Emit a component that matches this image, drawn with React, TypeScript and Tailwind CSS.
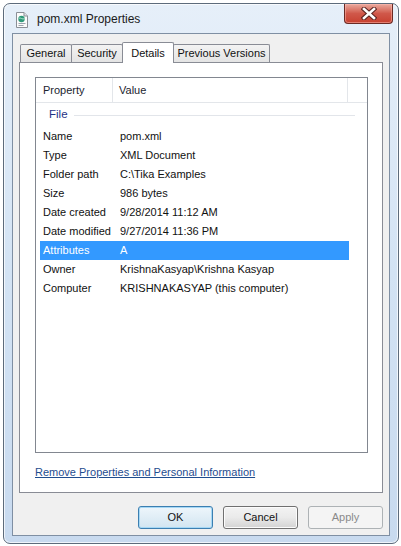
const rows: [string, string][] = [
  ['Name', 'pom.xml'],
  ['Type', 'XML Document'],
  ['Folder path', 'C:\\Tika Examples'],
  ['Size', '986 bytes'],
  ['Date created', '9/28/2014 11:12 AM'],
  ['Date modified', '9/27/2014 11:36 PM'],
  ['Attributes', 'A'],
  ['Owner', 'KrishnaKasyap\\Krishna Kasyap'],
  ['Computer', 'KRISHNAKASYAP (this computer)'],
];

const SELECTED = 'Attributes';

function XmlIcon() {
  return (
    <svg width="14" height="16" viewBox="0 0 14 16">
      <path d="M1.5 0.5 H9 L12.5 4 V15.5 H1.5 Z" fill="#fbfbfb" stroke="#8a8f96" />
      <path d="M9 0.5 V4 H12.5" fill="#e2e4e8" stroke="#8a8f96" />
      <circle cx="6.5" cy="7" r="3.2" fill="#2f9a7a" />
      <path d="M4 6.2 C5.5 5.2 7.5 8 9.5 6.6" stroke="#b7e6d3" strokeWidth="0.9" fill="none" />
      <rect x="3.5" y="11" width="7" height="1" fill="#9aa3ad" />
      <rect x="3.5" y="13" width="5" height="1" fill="#9aa3ad" />
    </svg>
  );
}

function CloseGlyph() {
  return (
    <svg width="16" height="13" viewBox="0 0 16 13">
      <path d="M3 2 L13 11 M13 2 L3 11" stroke="#5a2420" strokeWidth="4.6" strokeLinecap="square" />
      <path d="M3 2 L13 11 M13 2 L3 11" stroke="#ffffff" strokeWidth="2.6" strokeLinecap="square" />
    </svg>
  );
}

function Tab({ label, selected, width }: { label: string; selected?: boolean; width: string }) {
  if (selected) {
    return (
      <div
        className={`${width} h-[21px] -ml-px -mb-px relative z-10 flex items-start justify-center pt-[2px] bg-white border border-b-0 border-[#898c95] rounded-t-[2px] text-[11px] text-[#111]`}
      >
        {label}
      </div>
    );
  }
  return (
    <div
      className={`${width} h-[18px] -ml-px first:ml-0 flex items-center justify-center bg-linear-to-b from-[#f3f3f3] to-[#e4e4e4] border border-b-0 border-[#898c95] rounded-t-[2px] text-[11px] text-[#111]`}
    >
      {label}
    </div>
  );
}

function Button({ label, variant }: { label: string; variant?: 'default' | 'disabled' }) {
  if (variant === 'default') {
    return (
      <div className="w-[75px] h-[23px] flex items-center justify-center rounded-[3px] border border-[#3c7fb1] bg-linear-to-b from-[#eef6fb] to-[#d2e5f1] shadow-[inset_0_0_0_1px_#a6d8f5] text-[11px] text-[#111]">
        {label}
      </div>
    );
  }
  if (variant === 'disabled') {
    return (
      <div className="w-[75px] h-[23px] flex items-center justify-center rounded-[3px] border border-[#adb2b5] bg-[#f4f4f4] text-[11px] text-[#8a8a8a]">
        {label}
      </div>
    );
  }
  return (
    <div className="w-[75px] h-[23px] flex items-center justify-center rounded-[3px] border border-[#707070] bg-linear-to-b from-[#f3f3f3] via-[#eaeaea] to-[#d3d3d3] shadow-[inset_0_0_0_1px_#fcfcfc] text-[11px] text-[#111]">
      {label}
    </div>
  );
}

export default function App() {
  return (
    <div
      className="w-[401px] h-[546px] bg-white pt-[3px] pl-[3px]"
      style={{ fontFamily: '"Liberation Sans", Arial, sans-serif' }}
    >
      <div className="w-[396px] h-[541px] flex flex-col rounded-[7px] border border-[#5d6b7b] bg-linear-to-b from-[#e6eff9] via-[#d3e3f4] to-[#c8daef] shadow-[inset_0_0_0_1px_rgba(255,255,255,0.7)]">
        {/* title bar */}
        <div className="h-[29px] flex items-start">
          <div className="ml-[11px] mt-[8px]">
            <XmlIcon />
          </div>
          <div className="ml-[8px] mt-[8px] text-[12px] text-[#1a1a1a] leading-[15px]">pom.xml Properties</div>
          <div className="ml-auto mr-[5px] w-[49px] h-[20px] flex items-center justify-center rounded-b-[4px] border border-t-0 border-[#6a2a24] bg-linear-to-b from-[#e9a99e] via-[#d0584a] to-[#c7402f] shadow-[inset_0_0_0_1px_rgba(255,190,180,0.5)]">
            <CloseGlyph />
          </div>
        </div>

        {/* client area */}
        <div className="flex-1 mx-[8px] mb-[7px] flex flex-col border border-[#7f8fa3] bg-[#f0f0f0]">
          <div className="pt-[8px] pl-[7px] flex items-end">
            <Tab label="General" width="w-[52px]" />
            <Tab label="Security" width="w-[52px]" />
            <Tab label="Details" selected width="w-[52px]" />
            <Tab label="Previous Versions" width="w-[97px]" />
          </div>

          <div className="flex-1 mx-[6px] flex flex-col border border-[#898c95] bg-white">
            <div className="ml-[15px] mt-[14px] w-[333px] h-[376px] border border-[#828790] bg-white flex flex-col">
              {/* header */}
              <div className="h-[25px] flex items-center border-b border-[#e3e6ea] text-[11px] text-[#1c2430]">
                <div className="w-[77px] h-full pl-[7px] flex items-center border-r border-[#e3e6ea]">Property</div>
                <div className="w-[235px] h-full pl-[6px] flex items-center border-r border-[#e3e6ea]">Value</div>
              </div>
              {/* group */}
              <div className="h-[24px] flex items-center pl-[13px] pr-[12px]">
                <span className="text-[11.5px] text-[#1e3287]">File</span>
                <div className="flex-1 ml-[6px] h-px bg-[#e2e5ea]" />
              </div>
              {rows.map(([label, value]) => {
                const sel = label === SELECTED;
                return (
                  <div
                    key={label}
                    className={`ml-[4px] w-[309px] h-[19px] flex items-center text-[11px] ${
                      sel ? 'bg-[#3399ff] text-white' : 'text-[#111]'
                    }`}
                  >
                    <div className="w-[80px] pl-[3px] whitespace-nowrap">{label}</div>
                    <div className="pl-[0px] whitespace-nowrap">{value}</div>
                  </div>
                );
              })}
            </div>
            <div className="ml-[15px] mt-[13px] text-[11px] leading-[13px] text-[#1f4d8f] underline underline-offset-1">
              Remove Properties and Personal Information
            </div>
          </div>

          <div className="mt-[13px] mb-[6px] pr-[6px] flex justify-end gap-[10px]">
            <Button label="OK" variant="default" />
            <Button label="Cancel" />
            <Button label="Apply" variant="disabled" />
          </div>
        </div>
      </div>
    </div>
  );
}
